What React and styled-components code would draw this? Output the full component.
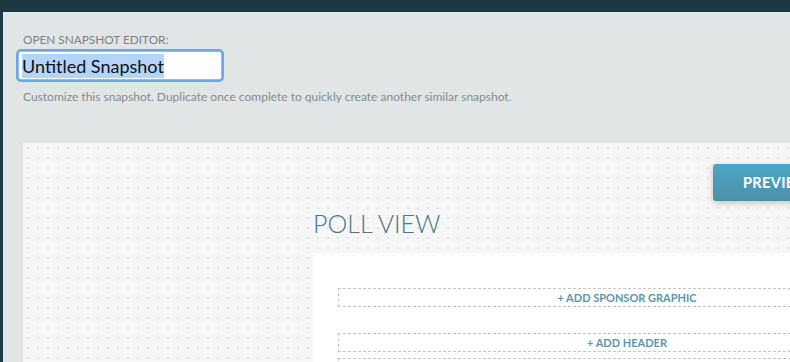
import React from 'react'
import styled, { createGlobalStyle } from 'styled-components'

const GlobalStyle = createGlobalStyle`
  html, body {
    margin: 0;
    padding: 0;
    overflow: hidden;
    background: #1c3840;
    font-family: Lato, "Open Sans", sans-serif;
  }
`

const Shell = styled.div`
  padding: 12px 0 0 3px;
  min-height: 350px;
`

const Editor = styled.section`
  background: #e1e5e6;
  padding: 20px 0 0 20px;
  width: 1000px;
  min-height: 330px;
`

const Label = styled.div`
  font-size: 11.8px;
  line-height: 16px;
  color: #7a8485;
  text-transform: uppercase;
`

const TitleField = styled.div`
  margin: 4px 0 0 -4px;
  width: 199px;
  height: 27px;
  padding-left: 3px;
  background: #fff;
  border-radius: 2px;
  box-shadow: 0 0 0 1px #8fbcf3, 0 0 0 3px #6ba6ef;
  display: flex;
  align-items: center;
  font-size: 18px;
  color: #111;
`

const Selected = styled.span`
  background: #b4d4fa;
  line-height: 24px;
`

const Hint = styled.p`
  margin: 10px 0 0;
  font-size: 12px;
  line-height: 15px;
  color: #838c8d;
`

const Canvas = styled.div`
  margin-top: 39px;
  background-color: #f7f7f7;
  background-image: radial-gradient(circle, #e2e2e2 1.1px, transparent 1.3px);
  background-size: 10px 10px;
  padding-top: 21px;
  min-height: 260px;
`

const Toolbar = styled.div`
  display: flex;
  justify-content: flex-end;
  padding-right: 183px;
`

const PreviewButton = styled.button`
  height: 37px;
  width: 127px;
  padding: 0 0 0 30px;
  text-align: left;
  border: none;
  border-radius: 3px;
  background: linear-gradient(#4ba6c5, #4e8fa8);
  box-shadow: 0 2px 6px rgba(0, 0, 0, 0.22);
  color: #fff;
  font-family: Lato, sans-serif;
  font-weight: 700;
  font-size: 14.6px;
  letter-spacing: 0.3px;
`

const PollColumn = styled.div`
  padding-left: 290px;
`

const Title = styled.h2`
  margin: 7px 0 0;
  font-size: 25px;
  line-height: 30px;
  font-weight: 300;
  color: #4b7886;
`

const Panel = styled.div`
  margin-top: 15px;
  width: 578px;
  background: #fff;
  padding: 35px 25px 20px;
`

const DropZone = styled.div`
  border: 1px dashed #c6c6c6;
  height: 17px;
  margin-top: ${p => p.$gap || 0}px;
  text-align: center;
  font-size: 11px;
  line-height: 17px;
  font-weight: 700;
  color: #5897ae;
  text-transform: uppercase;
`

export default function App() {
  return (
    <>
      <GlobalStyle />
      <Shell>
        <Editor>
          <Label>Open Snapshot Editor:</Label>
          <TitleField>
            <Selected>Untitled Snapshot</Selected>
          </TitleField>
          <Hint>
            Customize this snapshot. Duplicate once complete to quickly create
            another similar snapshot.
          </Hint>
          <Canvas>
            <Toolbar>
              <PreviewButton>PREVIEW</PreviewButton>
            </Toolbar>
            <PollColumn>
              <Title>POLL VIEW</Title>
              <Panel>
                <DropZone>+ Add Sponsor Graphic</DropZone>
                <DropZone $gap={26}>+ Add Header</DropZone>
                <DropZone $gap={6}>+ Add Question</DropZone>
              </Panel>
            </PollColumn>
          </Canvas>
        </Editor>
      </Shell>
    </>
  )
}
